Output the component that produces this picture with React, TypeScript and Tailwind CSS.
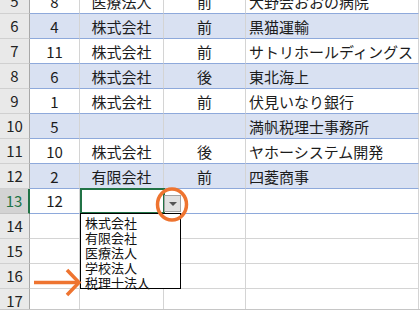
const rows = [
  { n: 5, b: "8", c: "医療法人", d: "前", e: "大野会おおの病院" },
  { n: 6, b: "4", c: "株式会社", d: "前", e: "黒猫運輸" },
  { n: 7, b: "11", c: "株式会社", d: "前", e: "サトリホールディングス" },
  { n: 8, b: "6", c: "株式会社", d: "後", e: "東北海上" },
  { n: 9, b: "1", c: "株式会社", d: "前", e: "伏見いなり銀行" },
  { n: 10, b: "5", c: "", d: "", e: "満帆税理士事務所" },
  { n: 11, b: "10", c: "株式会社", d: "後", e: "ヤホーシステム開発" },
  { n: 12, b: "2", c: "有限会社", d: "前", e: "四菱商事" },
];

const options = ["株式会社", "有限会社", "医療法人", "学校法人", "税理士法人"];

const grid = "grid grid-cols-[30px_50px_84px_82px_173px] h-[25px]";
const head =
  "flex items-center justify-center bg-[#e9e9e9] border-r border-r-[#a8a8a8] border-b border-b-[#d0d0d0] text-[15px] text-[#222]";

export default function App() {
  return (
    <div
      className="relative w-[420px] h-[310px] overflow-hidden bg-white border-b border-[#c6c6c6] text-[#1c1c1c]"
      style={{ fontFamily: '"Noto Sans CJK JP", "Liberation Sans", sans-serif' }}
    >
      <div className="-mt-[11px] flex flex-col">
        {rows.map((r) => {
          const band = r.n % 2 === 0 ? "bg-[#d9e1f2]" : "bg-white";
          const cell = `flex items-center border-r border-r-[#d4d4d4] border-b border-b-[#8ea9db] text-[15px] leading-none ${band}`;
          return (
            <div key={r.n} className={grid}>
              <div className={head}>{r.n}</div>
              <div className={`${cell} justify-center`}>{r.b}</div>
              <div className={`${cell} justify-center`}>{r.c}</div>
              <div className={`${cell} justify-center`}>{r.d}</div>
              <div className={`${cell} pl-[3px] whitespace-nowrap`}>{r.e}</div>
            </div>
          );
        })}

        {/* Row 13 — selected */}
        <div className={grid}>
          <div className="flex items-center justify-center bg-[#d3d3d3] border-r-2 border-r-[#217346] border-b border-b-[#c4c4c4] text-[15px] text-[#217346]">
            13
          </div>
          <div className="flex items-center justify-center border-r border-r-[#d4d4d4] border-b border-b-[#8ea9db] text-[15px]">
            12
          </div>
          <div className="relative border-r border-r-[#d4d4d4] border-b border-b-[#8ea9db]">
            <div className="absolute left-0 -top-[1px] w-[85px] h-[26px] border-2 border-[#217346]" />
            <div className="absolute left-[84px] top-[6px] w-[17px] h-[17px] bg-[#e1e1e1] border border-[#a3a3a3] flex items-center justify-center z-10">
              <div className="w-0 h-0 border-l-[4px] border-r-[4px] border-t-[4px] border-l-transparent border-r-transparent border-t-[#555]" />
            </div>
            <div className="absolute left-0 top-[24px] w-[101px] h-[76px] bg-white border border-black pl-[4px] pt-[1px] z-10 flex flex-col">
              {options.map((o) => (
                <div key={o} className="h-[15px] leading-[15px] text-[13px] text-[#111] whitespace-nowrap">
                  {o}
                </div>
              ))}
            </div>
          </div>
          <div className="border-r border-r-[#d4d4d4] border-b border-b-[#8ea9db]" />
          <div className="border-r border-r-[#d4d4d4] border-b border-b-[#8ea9db]" />
        </div>

        {[14, 15, 16, 17].map((n) => (
          <div key={n} className={grid}>
            <div className={head}>{n}</div>
            <div className="border-r border-b border-[#d4d4d4]" />
            <div className="border-r border-b border-[#d4d4d4]" />
            <div className="border-r border-b border-[#d4d4d4]" />
            <div className="border-r border-b border-[#d4d4d4]" />
          </div>
        ))}
      </div>

      {/* Callouts */}
      <svg className="absolute inset-0 pointer-events-none z-20" width="420" height="310" viewBox="0 0 420 310">
        <ellipse cx="172" cy="204.5" rx="14.5" ry="15.5" fill="none" stroke="#ee7430" strokeWidth="3.5" />
        <line x1="34" y1="282.5" x2="78" y2="282.5" stroke="#ee7430" strokeWidth="3.5" />
        <polyline points="67,270 79,282.5 67,295" fill="none" stroke="#ee7430" strokeWidth="3.5" />
      </svg>
    </div>
  );
}
